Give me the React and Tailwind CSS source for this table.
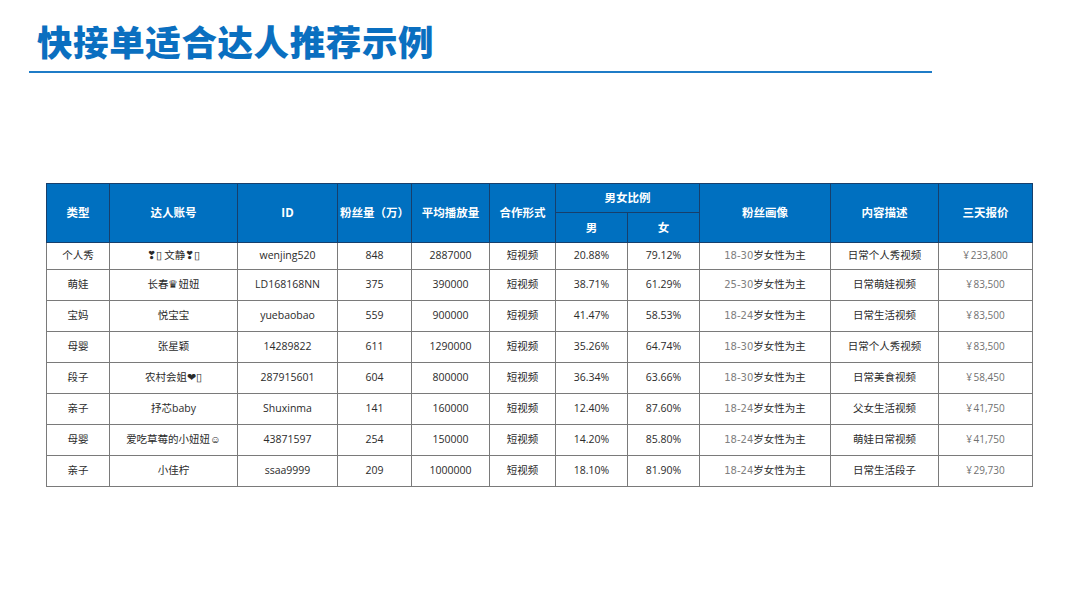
const rows = [
  ["个人秀", "❣▯ 文静❣▯", "wenjing520", "848", "2887000", "短视频", "20.88%", "79.12%", "18-30", "日常个人秀视频", "233,800"],
  ["萌娃", "长春♛妞妞", "LD168168NN", "375", "390000", "短视频", "38.71%", "61.29%", "25-30", "日常萌娃视频", "83,500"],
  ["宝妈", "悦宝宝", "yuebaobao", "559", "900000", "短视频", "41.47%", "58.53%", "18-24", "日常生活视频", "83,500"],
  ["母婴", "张星颖", "14289822", "611", "1290000", "短视频", "35.26%", "64.74%", "18-30", "日常个人秀视频", "83,500"],
  ["段子", "农村会姐❤▯", "287915601", "604", "800000", "短视频", "36.34%", "63.66%", "18-30", "日常美食视频", "58,450"],
  ["亲子", "抒芯baby", "Shuxinma", "141", "160000", "短视频", "12.40%", "87.60%", "18-24", "父女生活视频", "41,750"],
  ["母婴", "爱吃草莓的小妞妞☺", "43871597", "254", "150000", "短视频", "14.20%", "85.80%", "18-24", "萌娃日常视频", "41,750"],
  ["亲子", "小佳柠", "ssaa9999", "209", "1000000", "短视频", "18.10%", "81.90%", "18-24", "日常生活段子", "29,730"],
];

const widths = [63, 128, 100, 74, 78, 66, 72, 72, 131, 108, 94];

const th = "border border-[#173f6c] font-bold text-white text-[11.5px] text-center align-middle";
const td = "border border-[#7a7a7a] text-center align-middle text-[10.5px] text-[#2b2b2b]";

export default function App() {
  return (
    <div
      className="w-[1080px] h-[607px] bg-white overflow-hidden"
      style={{ fontFamily: '"Open Sans", "Noto Sans CJK SC", sans-serif' }}
    >
      <div className="pt-[19px] pl-[37px]">
        <h1
          className="text-[35.5px] leading-[44px] font-black text-[#0a6fc0] tracking-[0.6px]"
          style={{ fontFamily: '"Noto Sans CJK SC", sans-serif' }}
        >
          快接单适合达人推荐示例
        </h1>
      </div>
      <div className="ml-[29px] mt-[8px] w-[903px] h-[2px] bg-[#1f7cc7]" />

      <div className="pl-[46px] pt-[110px]">
        <table className="table-fixed border-collapse w-[987px]">
          <colgroup>
            {widths.map((w, i) => (
              <col key={i} style={{ width: w }} />
            ))}
          </colgroup>
          <thead className="bg-[#0070c0]">
            <tr className="h-[29px]">
              <th rowSpan={2} className={th}>类型</th>
              <th rowSpan={2} className={th}>达人账号</th>
              <th rowSpan={2} className={th}>ID</th>
              <th rowSpan={2} className={th}>粉丝量（万）</th>
              <th rowSpan={2} className={th}>平均播放量</th>
              <th rowSpan={2} className={th}>合作形式</th>
              <th colSpan={2} className={th}>男女比例</th>
              <th rowSpan={2} className={th}>粉丝画像</th>
              <th rowSpan={2} className={th}>内容描述</th>
              <th rowSpan={2} className={th}>三天报价</th>
            </tr>
            <tr className="h-[30px]">
              <th className={th}>男</th>
              <th className={th}>女</th>
            </tr>
          </thead>
          <tbody>
            {rows.map((r, i) => (
              <tr key={i} className={i === 0 ? "h-[27px]" : "h-[31px]"}>
                {r.slice(0, 8).map((c, j) => (
                  <td key={j} className={td}>{c}</td>
                ))}
                <td className={td}>
                  <span className="text-[#808080]" style={{ fontFamily: '"DejaVu Sans", sans-serif', fontSize: 10 }}>
                    {r[8]}
                  </span>
                  岁女性为主
                </td>
                <td className={td}>{r[9]}</td>
                <td className={td}>
                  <span className="text-[#707070] text-[10px]">¥&thinsp;{r[10]}</span>
                </td>
              </tr>
            ))}
          </tbody>
        </table>
      </div>
    </div>
  );
}
